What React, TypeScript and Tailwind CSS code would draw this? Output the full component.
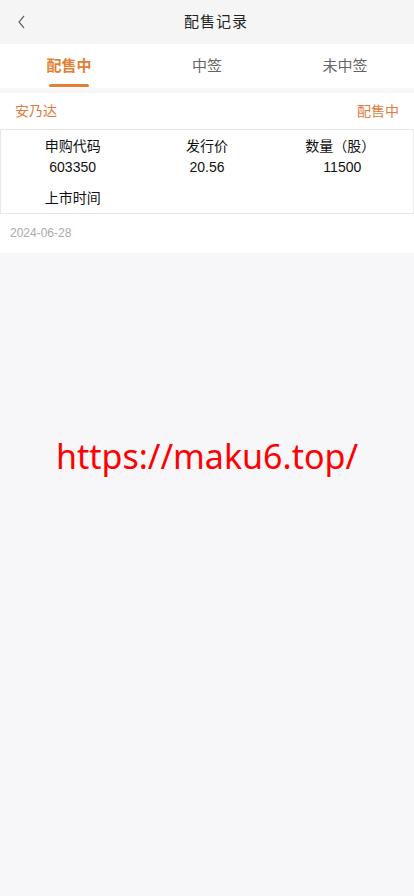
import React from "react";

export default function App() {
  const font = { fontFamily: '"Liberation Sans", "Noto Sans CJK SC", sans-serif' };
  return (
    <div className="min-h-[896px] w-[414px] bg-[#f7f6f8]" style={font}>
      <div className="relative flex h-[44px] items-center justify-center bg-[#f5f5f5]">
        <svg className="absolute left-[16px] top-[14px]" width="12" height="16" viewBox="0 0 12 16">
          <path d="M8 2 L3 8 L8 14" fill="none" stroke="#666" strokeWidth="1.2" />
        </svg>
        <span className="ml-[18px] text-[15px] tracking-[1px] text-[#222]">配售记录</span>
      </div>
      <div className="grid h-[44px] grid-cols-3 bg-white">
        <div className="relative flex items-center justify-center">
          <span className="text-[15px] font-bold text-[#e47f33]">配售中</span>
          <div className="absolute bottom-[1px] left-1/2 h-[3px] w-[40px] -translate-x-1/2 rounded-full bg-[#e47f33]" />
        </div>
        <div className="flex items-center justify-center text-[15px] text-[#666]">中签</div>
        <div className="flex items-center justify-center text-[15px] text-[#666]">未中签</div>
      </div>
      <div className="mt-[5px] bg-white pb-[1px]">
        <div className="flex h-[36px] items-center justify-between px-[15px] text-[14px] text-[#e07b3a]">
          <span>安乃达</span>
          <span>配售中</span>
        </div>
        <div className="border border-[#e8e8e8] pb-[4px] pt-[6px] text-[14px] text-[#111]">
          <div className="grid grid-cols-3 text-center leading-[21px]">
            <span className="pl-[6px]">申购代码</span>
            <span>发行价</span>
            <span className="pr-[8px]">数量（股）</span>
            <span className="pl-[6px]">603350</span>
            <span>20.56</span>
            <span className="pr-[4px]">11500</span>
          </div>
          <div className="grid grid-cols-3 text-center mt-[10px] leading-[21px]">
            <span className="pl-[6px]">上市时间</span>
          </div>
        </div>
        <div className="flex h-[38px] items-center px-[10px] text-[12px] text-[#aaa]">2024-06-28</div>
      </div>
      <div className="mt-[179px] flex justify-center">
        <span className="text-[34px] leading-[48px] text-[#f00]" style={{ fontFamily: '"Noto Sans", sans-serif' }}>https://maku6.top/</span>
      </div>
    </div>
  );
}
